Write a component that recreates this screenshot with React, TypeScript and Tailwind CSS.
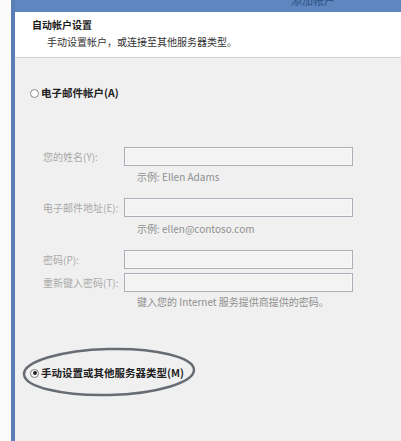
import React from "react";

const font = { fontFamily: '"Noto Sans CJK SC", "Noto Sans", sans-serif' };

function Field({ label, mt }: { label: string; mt: string }) {
  return (
    <div className={`flex items-center ${mt}`}>
      <div className="w-[81px] text-[10px] leading-[14px] text-[#a9a9a9] whitespace-nowrap">{label}</div>
      <div className="w-[229px] h-[19px] border border-[#aab0ba] bg-[#f3f3f3] shadow-[inset_0_0_0_1px_#f8f8f8]" />
    </div>
  );
}

function Hint({ text, mt }: { text: string; mt: string }) {
  return (
    <div className={`pl-[94px] text-[10px] leading-[14px] text-[#8f8f8f] whitespace-nowrap ${mt}`}>{text}</div>
  );
}

export default function App() {
  return (
    <div className="w-[401px] h-[441px] flex bg-white overflow-hidden" style={font}>
      <div className="w-[11px] bg-[#fbfbfb]" />
      <div className="w-[4px] bg-[#5a7fb6]" />
      <div className="flex-1 flex flex-col">
        <div className="h-[12px] bg-[#5e87c0] overflow-hidden flex justify-end pr-[66px]">
          <div className="-mt-[7px] text-[11px] leading-[14px] text-[#2f4f80]">添加帐户</div>
        </div>
        <div className="h-[45px] bg-white pt-[6px] pl-[17px]">
          <div className="text-[10px] leading-[14px] font-bold text-[#1a1a1a]">自动帐户设置</div>
          <div className="pl-[15px] mt-[3px] text-[10px] leading-[14px] text-[#333]">手动设置帐户，或连接至其他服务器类型。</div>
        </div>
        <div className="h-[1px] bg-[#cfcfcf]" />
        <div className="flex-1 bg-[#f0f0f0] flex flex-col">
          <div className="mt-[28px] ml-[15px] flex items-center h-[14px] gap-[2px]">
            <div className="w-[9px] h-[9px] rounded-full border border-[#8a8a8a] bg-white" />
            <div className="text-[10.5px] leading-[14px] font-bold text-[#222]">电子邮件帐户(A)</div>
          </div>
          <div className="ml-[28px] flex flex-col">
            <Field label="您的姓名(Y):" mt="mt-[47px]" />
            <Hint text="示例: Ellen Adams" mt="mt-[4px]" />
            <Field label="电子邮件地址(E):" mt="mt-[14px]" />
            <Hint text="示例: ellen@contoso.com" mt="mt-[5px]" />
            <Field label="密码(P):" mt="mt-[14px]" />
            <Field label="重新键入密码(T):" mt="mt-[4px]" />
            <Hint text="键入您的 Internet 服务提供商提供的密码。" mt="mt-[3px]" />
          </div>
          <div className="relative mt-[57px] ml-[15px] flex items-center h-[14px] gap-[2px]">
            <div className="w-[9px] h-[9px] rounded-full border border-[#7a7a7a] bg-white flex items-center justify-center">
              <div className="w-[4px] h-[4px] rounded-full bg-[#222]" />
            </div>
            <div className="text-[10.5px] leading-[14px] font-bold text-[#222] whitespace-nowrap">手动设置或其他服务器类型(M)</div>
            <svg className="absolute left-[-8px] top-[-20px]" width="176" height="52" viewBox="0 0 176 52">
              <ellipse cx="87" cy="26" rx="85" ry="23" fill="none" stroke="#676b72" strokeWidth="2.5" transform="rotate(-1.5 87 26)" />
            </svg>
          </div>
        </div>
      </div>
    </div>
  );
}
